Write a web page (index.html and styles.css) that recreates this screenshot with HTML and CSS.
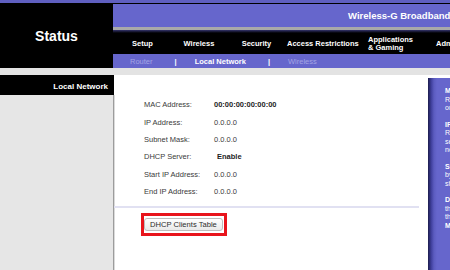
FILE: index.html
```html
<!DOCTYPE html>
<html lang="en">

<head>
    <meta charset="UTF-8">
    <meta name="viewport" content="width=device-width, initial-scale=1.0">
    <title>Status - Local Network</title>
    <link rel="stylesheet" href="styles.css">
</head>

<body>
    <div class="page">
        <div class="topline"></div>

        <!-- Header: page title, product name and menus -->
        <div class="header">
            <div class="brand">Status</div>
            <div class="masthead">
                <div class="product">Wireless-G Broadband Router</div>
                <div class="rule"></div>
                <div class="tabs">
                    <span>Setup</span>
                    <span>Wireless</span>
                    <span>Security</span>
                    <span>Access Restrictions</span>
                    <span class="two-line">Applications<br>&amp; Gaming</span>
                    <span class="last">Administration</span>
                </div>
                <div class="subnav">
                    <span class="dim">Router</span>
                    <span class="bar">|</span>
                    <span class="current">Local Network</span>
                    <span class="bar">|</span>
                    <span class="dim">Wireless</span>
                </div>
            </div>
        </div>

        <div class="band"></div>

        <div class="body">
            <div class="side">
                <div class="side-head">Local Network</div>
                <div class="side-fill"></div>
            </div>

            <div class="content">
                <div class="info">
                    <span class="label">MAC Address:</span>
                    <span class="value strong">00:00:00:00:00:00</span>
                    <span class="label">IP Address:</span>
                    <span class="value">0.0.0.0</span>
                    <span class="label">Subnet Mask:</span>
                    <span class="value">0.0.0.0</span>
                    <span class="label">DHCP Server:</span>
                    <span class="value strong shifted">Enable</span>
                    <span class="label">Start IP Address:</span>
                    <span class="value">0.0.0.0</span>
                    <span class="label">End IP Address:</span>
                    <span class="value">0.0.0.0</span>
                </div>

                <div class="divider"></div>

                <!-- red frame around the button -->
                <div class="highlight">
                    <button class="btn">DHCP Clients Table</button>
                </div>
            </div>

            <div class="help">
                <p><b>MAC Address:</b> The<br>Router's MAC Address, as seen<br>on your local network.</p>
                <p><b>IP Address:</b> The<br>Router's IP Address, as<br>seen on your local<br>network.</p>
                <p><b>Subnet Mask:</b> The mask<br>by your local network<br>shown here.</p>
                <p><b>DHCP Server:</b> Status of<br>the DHCP server on<br>the Router.<br><b>More...</b></p>
            </div>
        </div>
    </div>
</body>

</html>
```

FILE: styles.css
```css
body {
    margin: 0;
    font-family: "Liberation Sans", Arial, sans-serif;
    background: white;
    overflow: hidden;
}

.page {
    width: 580px;
    height: 270px;
    display: flex;
    flex-direction: column;
}

.topline {
    height: 3px;
    background-color: #5f5fc0;
}

.header {
    display: grid;
    grid-template-columns: 113px 1fr;
    height: 65px;
    background-color: black;
}

.brand {
    display: flex;
    justify-content: center;
    align-items: center;
    color: white;
    font-size: 14px;
    font-weight: bold;
}

.masthead {
    padding-top: 1px;
    display: flex;
    flex-direction: column;
}

.product {
    height: 23px;
    line-height: 23px;
    padding-left: 235px;
    background-color: #6666cc;
    color: white;
    font-size: 9.5px;
    font-weight: bold;
    white-space: nowrap;
}

.rule {
    height: 6px;
    background: linear-gradient(to bottom, #a9a9a9 0, #a9a9a9 3px, #35356e 3px, black 6px);
}

.tabs {
    height: 21px;
    display: grid;
    grid-template-columns: 59px 54px 61px 68px 72px auto;
    align-items: center;
    color: white;
    font-size: 7.5px;
    font-weight: bold;
    white-space: nowrap;
}

.tabs span {
    text-align: center;
}

.tabs .two-line {
    text-align: left;
    padding-left: 13px;
    line-height: 8px;
}

.tabs .last {
    text-align: left;
    padding-left: 9px;
}

.subnav {
    height: 14px;
    display: flex;
    align-items: center;
    padding-left: 17px;
    background-color: #6666cc;
    font-size: 7.5px;
    white-space: nowrap;
}

.subnav .dim {
    color: #a4a4e4;
}

.subnav .bar {
    margin: 0 18px 0 22px;
    color: white;
    font-weight: bold;
}

.subnav .current {
    color: white;
    font-weight: bold;
}

.band {
    height: 7px;
    background-color: #e3e3e3;
}

.body {
    flex: 1;
    display: grid;
    grid-template-columns: 114px 314px 150px;
}

.side {
    display: flex;
    flex-direction: column;
}

.side-head {
    height: 20px;
    line-height: 23px;
    padding-right: 6px;
    background-color: black;
    color: white;
    font-size: 8px;
    font-weight: bold;
    text-align: right;
}

.side-fill {
    flex: 1;
    background-color: #e6e6e6;
    border-right: 1px solid #9c9c9c;
    box-shadow: 1px 0 0 #dadada;
}

.content {
    padding-top: 21px;
}

.info {
    display: grid;
    grid-template-columns: 70px auto;
    grid-auto-rows: 17.4px;
    align-items: center;
    padding-left: 30px;
    font-size: 7.5px;
    color: #3a3a3a;
}

.value.strong {
    font-weight: bold;
    color: #1e1e1e;
}

.value.shifted {
    padding-left: 3px;
}

.divider {
    height: 2px;
    margin: 6px 9px 0 0;
    background-color: #e1e1f2;
}

.highlight {
    display: inline-block;
    margin: 5px 0 0 27px;
    padding: 2px 1px 2px 0;
    border: 3px solid #e8141c;
}

.btn {
    display: block;
    height: 13px;
    padding: 0 5px;
    border: 1px solid #bdbdbd;
    border-radius: 3px;
    background: linear-gradient(to bottom, #ffffff, #e9e9e9);
    font-family: "Liberation Sans", Arial, sans-serif;
    font-size: 7.6px;
    color: #2c2c2c;
    line-height: 11px;
}

.help {
    margin-top: 3px;
    padding: 9px 0 0 17px;
    background: linear-gradient(to right, #1c1c4c 0, #3d3d99 3px, #5c5cc0 6px, #6666cc 9px);
    color: white;
    font-size: 7px;
    line-height: 8.5px;
    white-space: nowrap;
}

.help p {
    margin: 0 0 8px 0;
}
```
